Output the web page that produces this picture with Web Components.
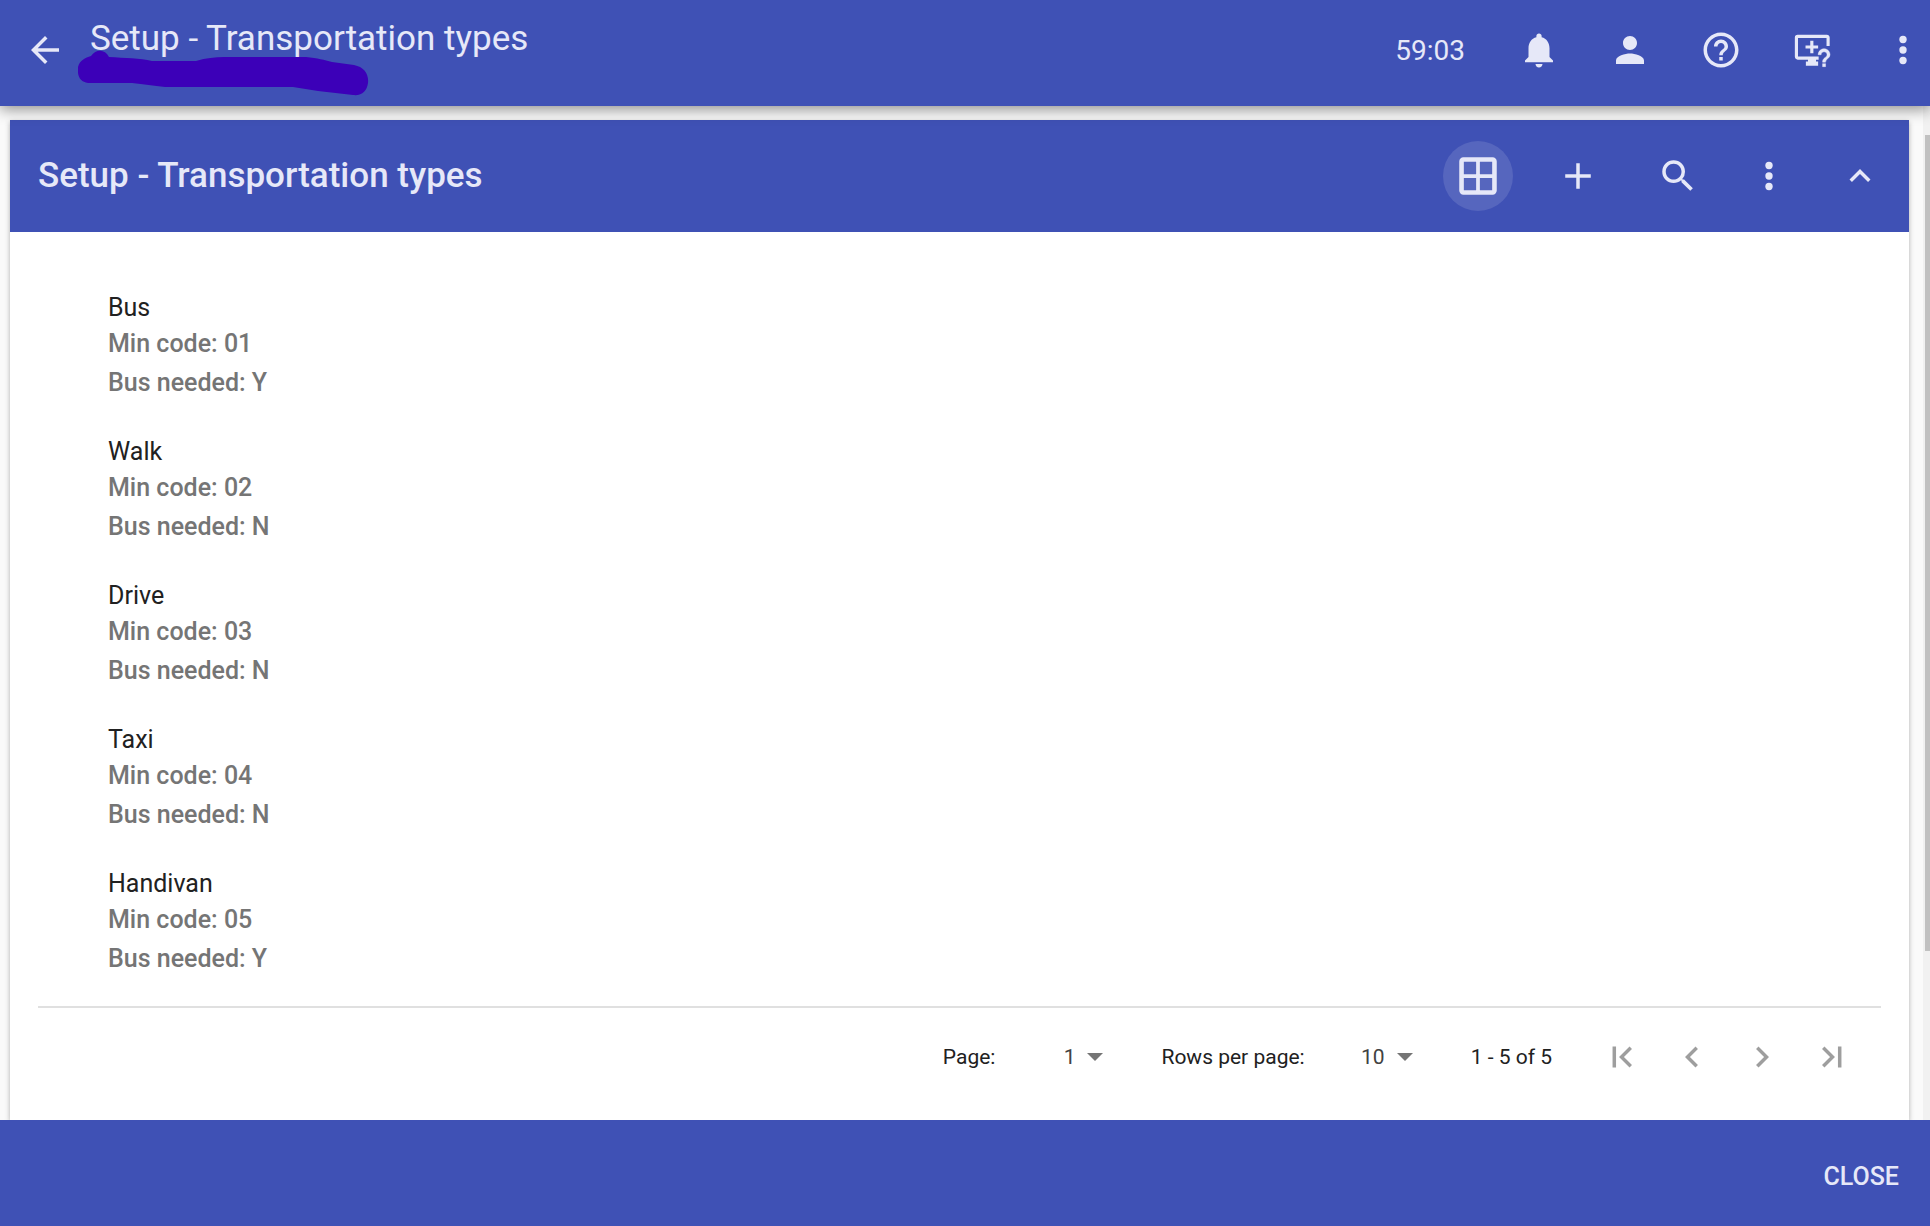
<!DOCTYPE html>
<html lang="en">
<head>
<meta charset="utf-8">
<title>Setup - Transportation types</title>
<style>
  html, body { height: 100%; margin: 0; }
  body { font-family: Roboto, "Liberation Sans", sans-serif; background: #fafafa; --primary: #3f51b5; --on-primary: #e6e8f8; }
</style>
</head>
<body>
<setup-page></setup-page>
<script>
const ICONS = {
  back: '<path d="M20 11H7.83l5.59-5.59L12 4l-8 8 8 8 1.41-1.41L7.83 13H20z"/>',
  bell: '<path d="M12 22c1.1 0 2-.9 2-2h-4c0 1.1.89 2 2 2zm6-6v-5c0-3.07-1.64-5.64-4.5-6.32V4c0-.83-.67-1.5-1.5-1.5s-1.5.67-1.5 1.5v.68C7.63 5.36 6 7.92 6 11v5l-2 2v1h16v-1z"/>',
  person: '<path d="M12 12c2.21 0 4-1.79 4-4s-1.79-4-4-4-4 1.79-4 4 1.79 4 4 4zm0 2c-2.67 0-8 1.34-8 4v2h16v-2c0-2.66-5.33-4-8-4z"/>',
  help: '<path d="M11 18h2v-2h-2v2zm1-16C6.48 2 2 6.48 2 12s4.48 10 10 10 10-4.48 10-10S17.52 2 12 2zm0 18c-4.41 0-8-3.59-8-8s3.59-8 8-8 8 3.59 8 8-3.59 8-8 8zm0-14c-2.21 0-4 1.79-4 4h2c0-1.1.9-2 2-2s2 .9 2 2c0 2-3 1.75-3 5h2c0-2.25 3-2.5 3-5 0-2.21-1.79-4-4-4z"/>',
  assist: '<path d="M21.2 9.7V4.9a.7.7 0 0 0-.7-.7H3.8a.7.7 0 0 0-.7.7v11a.7.7 0 0 0 .7.7h12" fill="none" stroke="currentColor" stroke-width="1.8"/><path d="M11 6.7h1.8v2.7h2.7v1.8h-2.7v2.7H11v-2.7H8.300V9.400H11zM9.700 16.600h4.600v1.900h1.200V21h-7v-2.500h1.200z"/><path transform="translate(8.7 6.2) scale(.85)" stroke="currentColor" stroke-width=".3" d="M12 6c-2.21 0-4 1.79-4 4h2c0-1.1.9-2 2-2s2 .9 2 2c0 2-3 1.75-3 5h2c0-2.25 3-2.5 3-5 0-2.21-1.79-4-4-4zm-1 10h2v2h-2z"/>',
  more: '<circle cx="12" cy="6" r="2.1"/><circle cx="12" cy="12" r="2.1"/><circle cx="12" cy="18" r="2.1"/>',
  grid: '<path fill-rule="evenodd" d="M5 3h14a2 2 0 0 1 2 2v14a2 2 0 0 1-2 2H5a2 2 0 0 1-2-2V5a2 2 0 0 1 2-2zm.2 2.2v5.9h5.9V5.2zm7.7 0v5.9h5.9V5.2zm-7.700 7.700v5.900h5.900v-5.900zm7.700 0v5.900h5.900v-5.900z"/>',
  add: '<path d="M19.300 13h-6.300v6.300h-2V13H4.700v-2H11V4.700h2V11h6.300z"/>',
  search: '<path d="M15.5 14h-.79l-.28-.27A6.471 6.471 0 0 0 16 9.5 6.5 6.5 0 1 0 9.5 16c1.61 0 3.09-.59 4.23-1.57l.27.28v.79l5 4.99L20.49 19l-4.990-5zm-6 0C7.010 14 5 11.990 5 9.500S7.010 5 9.500 5 14 7.010 14 9.500 11.990 14 9.500 14z"/>',
  up: '<path d="M12 8l-6 6 1.41 1.41L12 10.83l4.59 4.58L18 14z"/>',
  first: '<path d="M17.71 16.59L13.12 12l4.590-4.590L16.300 6l-6 6 6 6zM6.600 6h2v12h-2z"/>',
  prev: '<path d="M15.41 7.41L14 6l-6 6 6 6 1.41-1.41L10.83 12z"/>',
  next: '<path d="M10 6L8.59 7.41 13.17 12l-4.58 4.59L10 18l6-6z"/>',
  last: '<path d="M6.290 7.410L10.880 12l-4.590 4.590L7.700 18l6-6-6-6zM15.400 6h2v12h-2z"/>'
};
const icon = name => `<svg viewBox="0 0 24 24" aria-hidden="true">${ICONS[name]}</svg>`;

function define(tag, css, html) {
  customElements.define(tag, class extends HTMLElement {
    constructor() {
      super();
      this.attachShadow({ mode: 'open' });
      const t = document.createElement('template');
      t.innerHTML = `<style>*{box-sizing:border-box} :host{box-sizing:border-box}${css}</style>` + (typeof html === 'function' ? html(this) : html);
      this.shadowRoot.append(t.content.cloneNode(true));
    }
  });
}

/* Round icon button; the cell width is set with --box. */
customElements.define('icon-button', class extends HTMLElement {
  connectedCallback() {
    if (this.shadowRoot) return;
    this.attachShadow({ mode: 'open' }).innerHTML = `<style>
      :host { display: flex; justify-content: center; flex: none; width: var(--box, 84px); }
      button { display: flex; align-items: center; justify-content: center; width: 70px; height: 70px; padding: 0;
        border: 0; border-radius: 50%; background: none; color: inherit; cursor: pointer; }
      :host([active]) button { background: rgba(255,255,255,.12); }
      svg { width: 42px; height: 42px; fill: currentColor; }
      :host([active]) svg { width: 50px; height: 50px; }
    </style><button type="button" aria-label="${this.getAttribute('label')}">${icon(this.getAttribute('icon'))}</button>`;
  }
});

define('app-header', `
  :host { display: flex; position: relative; z-index: 1; height: 106px; padding: 0 0 6px 3px; align-items: center;
    background: var(--primary); color: var(--on-primary); box-shadow: 0 3px 14px rgba(0,0,0,.45); }
  .title { align-self: flex-start; position: relative; flex: 1; padding: 19px 0 0 3px; }
  h1 { margin: 0; font-size: 35px; line-height: 40px; font-weight: 400; }
  .mark { position: absolute; left: -9px; top: 50px; width: 292px; height: 46px; }
  .time { font-size: 28px; line-height: 35px; margin-right: 32px; }
  nav { display: flex; gap: 7px; margin-right: -15px; }`,
  `<icon-button icon="back" label="Back"></icon-button>
  <div class="title"><h1>Setup - Transportation types</h1>
    <svg class="mark" viewBox="0 0 292 46" aria-hidden="true"><path fill="#3c00b8" d="M0 17C2 10 7 8 13 6C18-1 27-1 31 7C47 8 62 8 74 11H118C128 8 137 7 146 7H228C240 8 246 10 254 12L276 15C286 17 291 24 290 33C289 41 284 46 275 45L240 41L215 37H87C75 36 66 34 54 33H10C2 32-1 26 0 17z"/></svg>
  </div>
  <span class="time">59:03</span>
  <nav aria-label="Tools"><icon-button icon="bell" label="Notifications"></icon-button><icon-button icon="person" label="Account"></icon-button><icon-button icon="help" label="Help"></icon-button><icon-button icon="assist" label="Remote assistance"></icon-button><icon-button icon="more" label="More"></icon-button></nav>`);

define('transport-item', `
  :host { display: block; color: #757575; font-weight: 500; }
  h3 { margin: 0; font-size: 25px; line-height: 32px; font-weight: 400; color: #212121; }
  p { margin: 0; font-size: 25px; line-height: 39px; }`,
  `<h3><slot></slot></h3><p>Min code: <slot name="code"></slot></p><p>Bus needed: <slot name="bus"></slot></p>`);

define('page-select', `
  :host { display: flex; align-items: center; gap: 10px; }
  .box { position: relative; display: flex; align-items: center; width: 98px; }
  select { appearance: none; width: 100%; margin: 0; padding: 0 28px 0 0; border: 0; background: none; color: #424242;
    font: inherit; line-height: 28px; text-align: right; text-align-last: right; }
  svg { position: absolute; right: 0; width: 16px; height: 8px; fill: #757575; pointer-events: none; }`,
  el => `<label for="s">${el.getAttribute('label')}</label><span class="box"><select id="s"><option>${el.getAttribute('value')}</option></select><svg viewBox="0 0 16 8" aria-hidden="true"><path d="M0 0h16L8 8z"/></svg></span>`);

define('list-pager', `
  :host { display: flex; align-items: center; justify-content: flex-end; height: 100px; padding-right: 14px;
    border-top: 2px solid #e0e0e0; color: #212121; font-size: 21px; line-height: 28px; }
  page-select { margin-right: 58px; }
  nav { display: flex; margin-left: 35px; color: #9e9e9e; --box: 70px; }`,
  `<page-select label="Page:" value="1"></page-select><page-select label="Rows per page:" value="10"></page-select>
  <span>1 - 5 of 5</span>
  <nav aria-label="Pages"><icon-button icon="first" label="First page"></icon-button><icon-button icon="prev" label="Previous page"></icon-button><icon-button icon="next" label="Next page"></icon-button><icon-button icon="last" label="Last page"></icon-button></nav>`);

define('setup-card', `
  :host { display: flex; flex-direction: column; background: #fff; box-shadow: 0 2px 5px rgba(0,0,0,.3); }
  header { display: flex; align-items: center; height: 112px; padding: 0 7px 0 28px; background: var(--primary); color: var(--on-primary); }
  h2 { flex: 1; margin: 0; font-size: 35px; line-height: 42px; font-weight: 500; }
  .main { display: flex; gap: 16px; margin-right: 16px; }
  .side { display: flex; gap: 7px; }
  .list { display: flex; flex-direction: column; gap: 34px; padding: 60px 98px 28px; }
  list-pager { margin: 0 28px; }`,
  `<header><h2><slot name="title"></slot></h2>
    <div class="main"><icon-button icon="grid" label="Grid view" active></icon-button><icon-button icon="add" label="Add"></icon-button></div>
    <div class="side"><icon-button icon="search" label="Search"></icon-button><icon-button icon="more" label="More"></icon-button><icon-button icon="up" label="Collapse"></icon-button></div>
  </header>
  <div class="list"><slot></slot></div>
  <list-pager></list-pager>`);

define('scroll-rail', `
  :host { display: flex; flex-direction: column; flex: none; width: 7px; padding: 29px 0 0 2px; background: #f1f1f1; }
  .thumb { flex: 816; background: #c1c1c1; }
  .rest { flex: 169; }`,
  `<div class="thumb"></div><div class="rest"></div>`);

define('app-footer', `
  :host { display: flex; align-items: center; justify-content: flex-end; height: 106px; padding: 6px 17px 0; background: var(--primary); color: var(--on-primary); }
  button { padding: 14px; border: 0; background: none; color: inherit; font: 500 25px/35px Roboto, sans-serif; text-transform: uppercase; cursor: pointer; }`,
  `<button type="button"><slot></slot></button>`);

define('setup-page', `
  :host { display: flex; flex-direction: column; height: 100vh; overflow: hidden; }
  app-header, app-footer { flex: none; }
  main { display: flex; flex: 1; min-height: 0; overflow: hidden; }
  setup-card { flex: 1; margin: 14px 14px 0 10px; }`,
  `<app-header></app-header>
  <main><setup-card><span slot="title">Setup - Transportation types</span>
  ${[['Bus','01','Y'],['Walk','02','N'],['Drive','03','N'],['Taxi','04','N'],['Handivan','05','Y']].map(([n,c,b]) => `<transport-item>${n}<span slot="code">${c}</span><span slot="bus">${b}</span></transport-item>`).join('')}
  </setup-card><scroll-rail></scroll-rail></main>
  <app-footer>Close</app-footer>`);
</script>
</body>
</html>
